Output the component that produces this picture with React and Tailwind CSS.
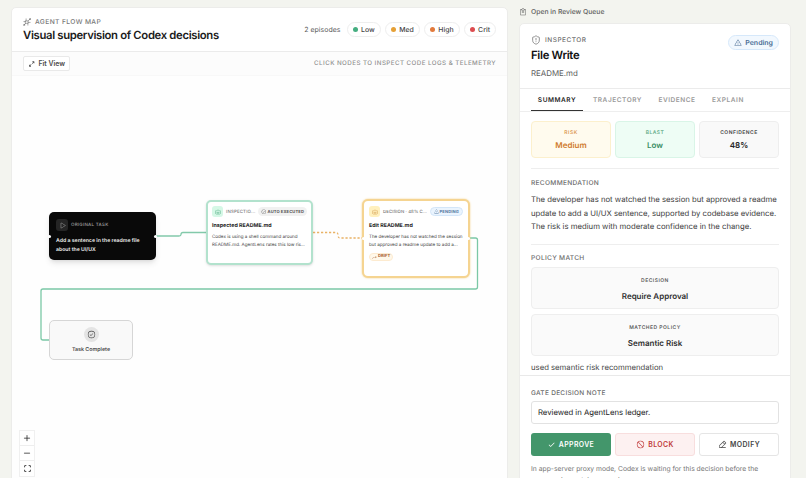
import React from 'react';
import {
  PiArrowBendUpRight,
  PiArrowsOutSimpleBold,
  PiCheckBold,
  PiCheckCircle,
  PiClipboardText,
  PiCornersOutBold,
  PiMinusBold,
  PiPencilSimpleLine,
  PiPlay,
  PiPlusBold,
  PiProhibit,
  PiRobot,
  PiWarning,
} from 'react-icons/pi';
import { ShieldAlert } from 'lucide-react';

const legend = [
  { label: 'Low', dot: 'bg-[#45ae80]' },
  { label: 'Med', dot: 'bg-[#e5a036]' },
  { label: 'High', dot: 'bg-[#e27a3c]' },
  { label: 'Crit', dot: 'bg-[#dc4c50]' },
];

const stats = [
  { label: 'RISK', value: 'Medium', box: 'bg-[#fffbee] border-[#fcf0cd]', head: 'text-[#dc9a55]', text: 'text-[#cf7a2c]' },
  { label: 'BLAST', value: 'Low', box: 'bg-[#eefdf5] border-[#d9f5e7]', head: 'text-[#67ad8b]', text: 'text-[#3b8e65]' },
  { label: 'CONFIDENCE', value: '48%', box: 'bg-[#f9f9f9] border-[#eeeeee]', head: 'text-[#4a4a4a]', text: 'text-[#242424]' },
];

const FlowIcon = () => (
  <svg className="w-[8px] h-[8px]" viewBox="0 0 18 18" fill="none" stroke="currentColor" strokeWidth="1.400" strokeLinecap="round" strokeLinejoin="round">
    <path d="M6 6.500h5.500v5.500H6zM11.500 6.500L16 2M6 12L2 16M7 6V2M11 12v4M6 8H2M12 10h4" />
    <circle cx="15.500" cy="2.500" r="1.300" />
    <circle cx="2.500" cy="15.500" r="1.300" />
  </svg>
);

const Handle = ({ className }) => (
  <span className={`absolute w-[3px] h-[3px] rounded-full bg-white ${className}`} />
);

const Canvas = () => (
  <div className="relative flex-1 bg-[#fefefe]">
    {/* Edges */}
    <svg className="absolute left-0 top-0" width="495" height="402" viewBox="12 76 495 402" fill="none" strokeWidth="1.3">
      <path d="M156 236H179Q181 236 181 234.500Q181 232.500 183 232.500H206" stroke="#82c9aa" />
      <path d="M313 232.500H336Q338 232.500 338 235Q338 238 340 238H362" stroke="#e9b266" strokeDasharray="2.200 1.800" />
      <path d="M470 238H475.500Q477.500 238 477.500 240V287Q477.500 289 475.500 289H43Q41 289 41 291V338Q41 340 43 340H50" stroke="#7bc8a6" />
    </svg>

    {/* Original task */}
    <div className="absolute left-[37px] top-[136px] w-[107px] h-[48px] rounded-[5px] bg-[#090909] px-[7px] pt-[7px] shadow-md">
      <div className="flex items-center gap-[3px]">
        <span className="flex items-center justify-center w-3 h-3 rounded-[3px] bg-[#252525] text-[#b5b5b5]">
          <PiPlay className="w-[7px] h-[7px]" />
        </span>
        <span className="pt-[2px] text-[4.500px] leading-[6px] tracking-[0.250px] font-medium text-[#a0a0a0]">ORIGINAL TASK</span>
      </div>
      <p className="mt-[6px] text-[5.200px] leading-[8.800px] font-semibold text-[#f0f0f0] whitespace-nowrap">
        Add a sentence in the readme file<br />about the UI/UX
      </p>
      <Handle className="-left-px top-[23px]" />
      <Handle className="-right-px top-[23px]" />
    </div>

    {/* Inspection */}
    <div className="absolute left-[194px] top-[124px] w-[107px] h-[65px] rounded-[5px] border-2 border-[#b2e2cd] bg-white px-[4px] pt-[4px] shadow-sm">
      <div className="flex items-center whitespace-nowrap">
        <span className="flex items-center justify-center w-[11px] h-[11px] rounded-[3px] bg-[#d5f8e6] text-[#3a9d70]">
          <PiRobot className="w-[6px] h-[6px]" />
        </span>
        <span className="ml-[3px] pt-[2px] text-[4.400px] leading-[6px] tracking-[0.180px] font-medium text-[#777777]">INSPECTIO...</span>
        <span className="ml-auto flex items-center gap-px h-[9px] px-[3px] rounded-full bg-[#f1f1f1] text-[4.100px] leading-none tracking-[0.120px] font-bold text-[#555555]">
          <PiCheckCircle className="w-[5.500px] h-[5.500px]" />
          <span className="pt-px">AUTO EXECUTED</span>
        </span>
      </div>
      <h3 className="mt-[5px] text-[5.300px] leading-[8px] font-bold text-[#252525]">Inspected README.md</h3>
      <p className="mt-[4px] text-[4.550px] leading-[7.500px] text-[#444444] whitespace-nowrap">
        Codex is using a shell command around<br />README.md. AgentLens rates this low ris...
      </p>
    </div>

    {/* Decision */}
    <div className="absolute left-[350px] top-[123px] w-[108px] h-[79px] rounded-[6px] border-2 border-[#f5d491] bg-white px-[5px] pt-[5px] shadow-[0_0_2px_#f3cf83]">
      <div className="flex items-center whitespace-nowrap">
        <span className="flex shrink-0 items-center justify-center w-[11px] h-[11px] rounded-[3px] bg-[#fff0bd] text-[#c98a37]">
          <PiRobot className="w-[6px] h-[6px]" />
        </span>
        <span className="ml-[3px] pt-[2px] text-[4.300px] leading-[6px] tracking-[0.100px] font-medium text-[#777777]">DECISION · 48% C...</span>
        <span className="ml-auto flex items-center gap-px h-[9px] px-[3px] rounded-full bg-[#eaf4fe] border-[0.500px] border-[#d3e6f9] text-[4.100px] leading-none tracking-[0.120px] font-bold text-[#54789f]">
          <PiWarning className="w-[5px] h-[5px]" />
          <span className="pt-px">PENDING</span>
        </span>
      </div>
      <h3 className="mt-[5px] text-[5.300px] leading-[8px] font-bold text-[#252525]">Edit README.md</h3>
      <p className="mt-[4px] text-[4.550px] leading-[7.500px] text-[#444444] whitespace-nowrap">
        The developer has not watched the session<br />but approved a readme update to add a...
      </p>
      <span className="mt-[4px] flex w-fit items-center gap-px h-[8px] px-[2px] rounded-full bg-[#fff8ea] border border-[#fdebd0] text-[4.200px] leading-none font-bold text-[#a5602e]">
        <PiArrowBendUpRight className="w-[5px] h-[5px]" />DRIFT
      </span>
      <Handle className="-left-[2px] top-[36px]" />
      <Handle className="-right-[2px] top-[36px]" />
    </div>

    {/* Task complete */}
    <div className="absolute left-[37px] top-[244px] w-[84px] h-[40px] rounded-[5px] border border-[#d6d6d6] bg-[#f9f9f9] flex flex-col items-center pt-[6px]">
      <span className="flex items-center justify-center w-[15px] h-[15px] rounded-full bg-[#e4e4e4] text-[#444444]">
        <PiCheckCircle className="w-[9px] h-[9px]" />
      </span>
      <span className="mt-[4px] text-[5.300px] leading-[8px] font-semibold text-[#4d4d4d]">Task Complete</span>
    </div>

    {/* Zoom controls */}
    <div className="absolute left-[7px] top-[354px] w-4 border border-[#f0f0f0] bg-white text-[#222222] divide-y divide-[#eeeeee]">
      <button className="flex w-full h-[15px] items-center justify-center"><PiPlusBold className="w-2 h-2" /></button>
      <button className="flex w-full h-[15px] items-center justify-center"><PiMinusBold className="w-2 h-2" /></button>
      <button className="flex w-full h-[15px] items-center justify-center"><PiCornersOutBold className="w-[9px] h-[9px]" /></button>
    </div>
  </div>
);

const FlowMap = () => (
  <section className="w-[497px] h-[490px] shrink-0 flex flex-col bg-white border border-[#ececea] rounded-[5px] overflow-hidden">
    <header className="h-[44px] shrink-0 flex items-center justify-between px-[11px] border-b border-[#ebebeb]">
      <div>
        <div className="flex items-center gap-[4px] text-[#777777]">
          <FlowIcon />
          <span className="pt-px text-[6.700px] leading-[10px] tracking-[0.370px] font-medium">AGENT FLOW MAP</span>
        </div>
        <h1 className="text-[11.300px] leading-[16px] tracking-[-0.330px] font-semibold text-[#1b1b1b] whitespace-nowrap">
          Visual supervision of Codex decisions
        </h1>
      </div>
      <div className="flex items-center gap-[4.500px]">
        <span className="mr-[2px] pt-px text-[7px] text-[#606060]">2 episodes</span>
        {legend.map((item) => (
          <span key={item.label} className="flex items-center gap-[3px] h-[15px] px-[5px] rounded-full border border-[#eeeeee] text-[6.900px] font-medium text-[#444444]">
            <span className={`w-[5px] h-[5px] rounded-full ${item.dot}`} />
            <span className="pt-px">{item.label}</span>
          </span>
        ))}
      </div>
    </header>
    <div className="h-[24px] shrink-0 flex items-center justify-between px-[11px] bg-[#fcfcfc] border-b border-[#f8f8f8]">
      <button className="flex items-center gap-[3px] h-[15px] w-[47px] px-[4px] rounded-[2px] border border-[#e9e9e9] bg-white text-[6.900px] font-semibold text-[#4c4c4c] whitespace-nowrap">
        <PiArrowsOutSimpleBold className="w-[8px] h-[8px]" />
        <span className="pt-px">Fit View</span>
      </button>
      <span className="pt-px text-[6.200px] tracking-[0.460px] font-medium text-[#909090]">CLICK NODES TO INSPECT CODE LOGS &amp; TELEMETRY</span>
    </div>
    <Canvas />
  </section>
);

const PolicyCard = ({ label, value }) => (
  <div className="h-[42px] flex flex-col items-center justify-center gap-[5px] pt-[3px] rounded-[4px] border border-[#eeeeee] bg-[#fafafa]">
    <span className="text-[5px] leading-[8px] tracking-[0.480px] font-semibold text-[#5e5e5e]">{label}</span>
    <span className="text-[8px] leading-[12px] font-semibold text-[#303030]">{value}</span>
  </div>
);

const Inspector = () => (
  <aside className="w-[272px] shrink-0 flex flex-col">
    <a className="flex shrink-0 items-center gap-[4px] h-[10px] text-[6.800px] font-medium text-[#606060]">
      <PiClipboardText className="w-[8px] h-[8px]" />Open in Review Queue
    </a>
    <section className="mt-[6px] h-[480px] shrink-0 flex flex-col bg-white border border-[#ececea] rounded-[5px] overflow-hidden">
      <header className="h-[65px] shrink-0 flex items-start justify-between px-[11px] pt-[11px] border-b border-[#ebebeb]">
        <div>
          <div className="flex items-center gap-[4px] text-[#707070]">
            <ShieldAlert className="w-[10px] h-[10px]" strokeWidth={1.8} />
            <span className="text-[6.500px] leading-[10px] tracking-[0.500px] font-medium">INSPECTOR</span>
          </div>
          <h2 className="mt-[3px] text-[11.300px] leading-[15px] tracking-[-0.300px] font-semibold text-[#111111]">File Write</h2>
          <p className="mt-[5px] text-[7.900px] leading-[10px] text-[#5c5c5c]">README.md</p>
        </div>
        <span className="flex items-center gap-[3px] h-[15px] px-[5px] rounded-full border border-[#d6e8fa] bg-[#f2f8fe] text-[7px] font-semibold text-[#4c6e96]">
          <PiWarning className="w-[8px] h-[8px]" />
          <span className="pt-px">Pending</span>
        </span>
      </header>

      {/* Tabs */}
      <nav className="h-[23px] shrink-0 flex px-[11px] border-b border-[#eeeeee] text-[6.500px] tracking-[0.550px] font-semibold text-[#9a9a9a]">
        <span className="w-[52px] pt-[2px] flex items-center justify-center border-b border-[#333333] text-[#252525]">SUMMARY</span>
        <span className="w-[69px] pt-px flex items-center justify-center">TRAJECTORY</span>
        <span className="w-[50px] pt-px flex items-center justify-center">EVIDENCE</span>
        <span className="w-[52px] pt-px flex items-center justify-center">EXPLAIN</span>
      </nav>

      <div className="h-[264px] shrink-0 px-[11px] pt-[9px] overflow-hidden border-b border-[#e9e9e9]">
        <div className="grid grid-cols-3 gap-[4px]">
          {stats.map((s) => (
            <div key={s.label} className={`h-[37px] flex flex-col items-center justify-center gap-[2px] pt-px rounded-[4px] border ${s.box}`}>
              <span className={`text-[5px] leading-[8px] tracking-[0.480px] font-semibold ${s.head}`}>{s.label}</span>
              <span className={`text-[8px] leading-[13px] font-semibold ${s.text}`}>{s.value}</span>
            </div>
          ))}
        </div>
        <div className="mt-[10px] pt-[10px] border-t border-[#eeeeee]">
          <h4 className="text-[6.600px] leading-[9px] tracking-[0.300px] font-medium text-[#6b6b6b]">RECOMMENDATION</h4>
          <p className="mt-[5px] text-[7.720px] leading-[13.500px] text-[#3c3c3c] whitespace-nowrap">
            The developer has not watched the session but approved a readme<br />
            update to add a UI/UX sentence, supported by codebase evidence.<br />
            The risk is medium with moderate confidence in the change.
          </p>
        </div>
        <div className="mt-[10px] pt-[9px] border-t border-[#eeeeee]">
          <h4 className="text-[6.600px] leading-[9px] tracking-[0.300px] font-medium text-[#6b6b6b]">POLICY MATCH</h4>
          <div className="mt-[4px] flex flex-col gap-[5px]">
            <PolicyCard label="DECISION" value="Require Approval" />
            <PolicyCard label="MATCHED POLICY" value="Semantic Risk" />
          </div>
          <p className="mt-[5px] text-[7.720px] leading-[13px] text-[#484848]">used semantic risk recommendation</p>
        </div>
      </div>

      {/* Gate decision */}
      <div className="px-[11px] pt-[12px]">
        <label className="block text-[6.500px] leading-[10px] tracking-[0.300px] font-medium text-[#6b6b6b]">GATE DECISION NOTE</label>
        <div className="mt-[3px] h-[23px] flex items-center px-[6px] pt-px rounded-[3px] border border-[#e2e2e2] text-[7.720px] text-[#222222]">Reviewed in AgentLens ledger.</div>
        <div className="mt-[9px] grid grid-cols-3 gap-[4px] text-[6.900px] tracking-[0.400px] font-semibold">
          <button className="h-[23px] flex items-center justify-center gap-[4px] rounded-[3px] bg-[#43966b] text-white">
            <PiCheckBold className="w-[7px] h-[7px]" />
            <span className="pt-px">APPROVE</span>
          </button>
          <button className="h-[23px] flex items-center justify-center gap-[3px] rounded-[3px] border border-[#f8dede] bg-[#fdf1f1] text-[#c03a3a]">
            <PiProhibit className="w-[9px] h-[9px]" />
            <span className="pt-px">BLOCK</span>
          </button>
          <button className="h-[23px] flex items-center justify-center gap-[3px] rounded-[3px] border border-[#e5e5e5] text-[#444444]">
            <PiPencilSimpleLine className="w-[9px] h-[9px]" />
            <span className="pt-px">MODIFY</span>
          </button>
        </div>
        <p className="mt-[7px] text-[6.770px] leading-[11px] text-[#757575] whitespace-nowrap">
          In app-server proxy mode, Codex is waiting for this decision before the<br />
          command or patch proceeds.
        </p>
      </div>
    </section>
  </aside>
);

const App = () => {
  return (
    <main className="flex gap-[11px] w-[806px] h-[478px] overflow-hidden pl-[11px] pt-[7px] bg-[#f3f4ef] font-['Inter','Liberation_Sans',sans-serif] [text-rendering:geometricPrecision]">
      <FlowMap />
      <Inspector />
    </main>
  );
};

export default App;
